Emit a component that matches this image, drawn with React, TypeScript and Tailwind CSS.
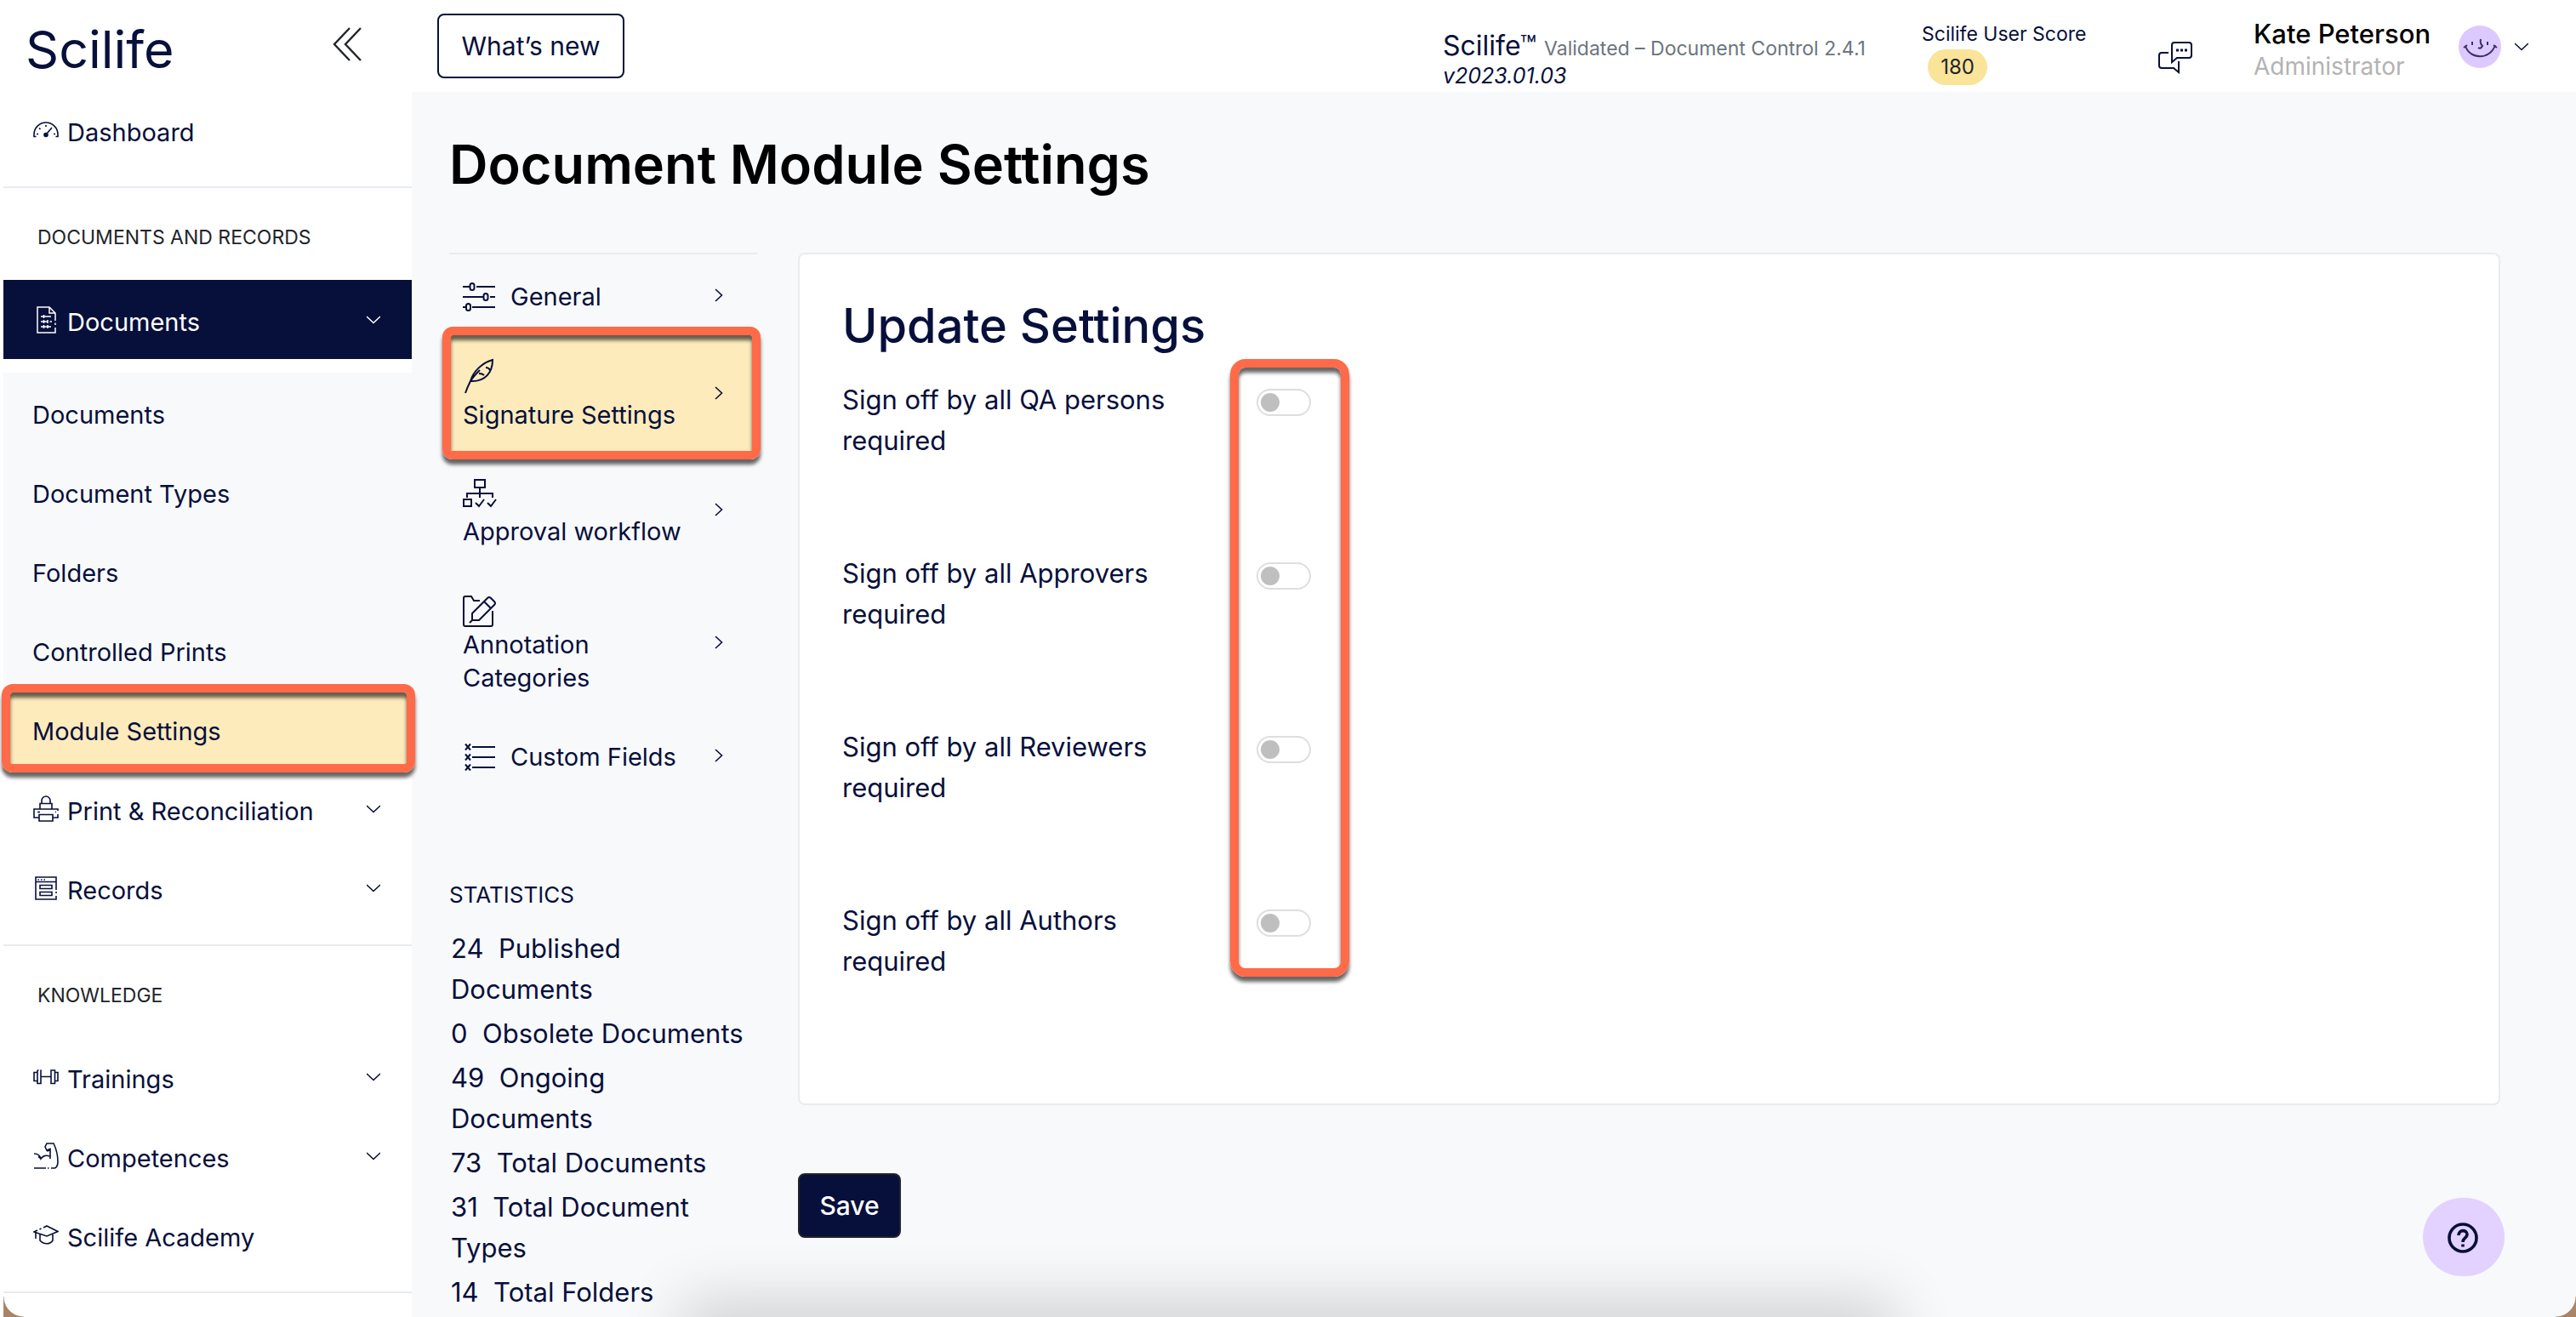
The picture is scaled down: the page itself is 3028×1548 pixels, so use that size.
import { ReactNode, SVGProps } from 'react'

type IconProps = SVGProps<SVGSVGElement>

function Icon({ children, ...props }: IconProps) {
  return (
    <svg fill="none" stroke="currentColor" strokeWidth={2} aria-hidden="true" {...props}>
      {children}
    </svg>
  )
}

const GaugeIcon = () => (
  <Icon viewBox="0 0 30 20" className="w-[30px] h-5" strokeWidth={1.6}>
    <path d="M3.5 17.5H1V15a14 14 0 0 1 28 0v2.5h-2.5M4 14.5h2M24 14.5h2M7 7.500l1.500 1.500M15 4v2M22 7l-5.500 6.500" />
    <circle cx="15" cy="15.500" r="2" fill="currentColor" />
  </Icon>
)

const DocumentIcon = () => (
  <Icon viewBox="0 0 30 32" className="w-[30px] h-8" strokeWidth={1.5}>
    <path d="M26 17V8l-7-7H5v30h21v-6M26 19.500v2.500M19 1v7h7M9 12h12M9 18h8M19.500 18H22M9 24h12M12.500 10v4M17 16v4M12.500 22v4M12.500 16v4M17 22v4" />
  </Icon>
)

const PrinterIcon = () => (
  <Icon viewBox="0 0 30 31" className="w-[30px] h-[31px]" strokeWidth={1.6}>
    <path d="M10 9V6a5 5 0 0 1 10 0v3M8 16V9.500h14V16M7 26H1V16h28v2M29 22v4h-6M7 22.500h16V30H7zM5 19.500h3M26 19.500h1" />
  </Icon>
)

const RecordsIcon = () => (
  <Icon viewBox="0 0 30 28" className="w-[30px] h-7" strokeWidth={1.6}>
    <path d="M27 16V1H3v26h24v-4M27 18v2M3 6.500h24M5.500 4h1.500M9 4h1.500M12.500 4H14M8 10.500h14v4H8zM8 18.500h14v4H8z" />
  </Icon>
)

const DumbbellIcon = () => (
  <Icon viewBox="0 0 30 18" className="w-[30px] h-[18px]" strokeWidth={1.6}>
    <path d="M5 3.500H1v10h4M5 1h1.500M8.500 1H9v15.500H5V1M9 8.500h12M21 1h4.500v15.500H21zM25.500 3.500H29v10h-3.500" />
  </Icon>
)

const ArmIcon = () => (
  <Icon viewBox="0 0 30 31" className="w-[30px] h-[31px]" strokeWidth={1.6}>
    <path d="M1 13c4 0 7 2 8 6 2-3 6-5 10-3M9 19l-3-2.500M20 19V7.500l-4 1.500-2-4 2-4h8c3 6 5 13 5 22 0 4-2 7-4 7h-4M1 30h14M17 30h1.500M20 9l-4 1" />
  </Icon>
)

const AcademyIcon = () => (
  <Icon viewBox="0 0 30 23" className="w-[30px] h-[23px]" strokeWidth={1.6}>
    <path d="M12 3l4-2 13 6.500L16 13 1 8l4-2M7.500 5l2-1M8 11v7c4 5 12 5 15 0v-7M3 9v5M2 15h2" />
  </Icon>
)

const SlidersIcon = () => (
  <Icon viewBox="0 0 38 34" className="w-[38px] h-[34px]">
    <path d="M0 5h8M16 5h22M0 17h24M32 17h6M0 29h4M11 29h27" />
    <rect x="8.500" y="1" width="5" height="8" rx="2.500" />
    <rect x="24.500" y="13" width="5" height="8" rx="2.500" />
    <rect x="4" y="25" width="5" height="8" rx="2.500" />
  </Icon>
)

const FeatherIcon = () => (
  <Icon viewBox="0 0 38 42" className="w-[38px] h-[42px]">
    <path d="M3 41c2-6 4-10 6-14C12 15 24 5 35 2c0 14-8 26-26 25M9 27c3-5 7-9 11-13M19 18c2 0 4 0 6 2M27 11c2 0 4 1 5 3" />
  </Icon>
)

const WorkflowIcon = () => (
  <Icon viewBox="0 -5 40 42" className="w-10 h-[42px]">
    <path d="M14 1h12v9H14zM20 10v12M5 22v-5h30v5M1 24h9v8H1zM15 28l4 4 6-8M29 28l4 4 6-8" />
  </Icon>
)

const NotesIcon = () => (
  <Icon viewBox="0 0 40 38" className="w-10 h-[38px]">
    <path d="M20 6h-7l-3-5H3a2 2 0 0 0-2 2v31a2 2 0 0 0 2 2h30a2 2 0 0 0 2-2V18" />
    <path d="M11 21L29 3q2-2 4 0l4 4q2 2 0 4L19 29h-8zM25 7l8 8M11 29l-3 3" />
  </Icon>
)

const FieldsIcon = () => (
  <Icon viewBox="0 0 38 34" className="w-[38px] h-[34px]">
    <path d="M11 5h27M11 17h27M11 29h27M3 1.500l6 7M9 1.500l-6 7M3 13.500l6 7M9 13.500l-6 7M3 25.500l6 7M9 25.500l-6 7" />
  </Icon>
)

const ChatIcon = () => (
  <Icon viewBox="0 0 40 38" className="w-10 h-[38px]">
    <path d="M18 1h18q3 0 3 3v12q0 3-3 3H22l-6 5V4q0-3 3-3zM12 13H4q-3 0-3 3v12q0 3 3 3h14l6 5V23" />
    <path d="M21 10h3M26 10h3M31 10h3" strokeWidth={3} />
  </Icon>
)

const ChevronDown = () => (
  <Icon viewBox="0 0 16 10" className="w-4 h-2.5 shrink-0" strokeWidth={1.6}>
    <path d="M0 1l8 7.500L16 1" />
  </Icon>
)

const ChevronRight = () => (
  <Icon viewBox="0 0 10 16" className="w-2.5 h-4 shrink-0" strokeWidth={1.6}>
    <path d="M1 1l7.500 7L1 15" />
  </Icon>
)

const documentLinks = ['Documents', 'Document Types', 'Folders', 'Controlled Prints', 'Module Settings']

const settingsTabs = [
  { name: 'General', icon: SlidersIcon, row: 'h-[95px]', inline: true },
  { name: 'Signature Settings', icon: FeatherIcon, row: 'h-[136px]', active: true },
  { name: 'Approval workflow', icon: WorkflowIcon, row: 'h-[138px]' },
  { name: 'Annotation Categories', icon: NotesIcon, row: 'h-[173px]', tight: true },
  { name: 'Custom Fields', icon: FieldsIcon, row: 'h-[93px]', inline: true },
]

const statistics = [
  { count: 24, label: 'Published Documents' },
  { count: 0, label: 'Obsolete Documents' },
  { count: 49, label: 'Ongoing Documents' },
  { count: 73, label: 'Total Documents' },
  { count: 31, label: 'Total Document Types' },
  { count: 14, label: 'Total Folders' },
]

const signOffRoles = ['QA persons', 'Approvers', 'Reviewers', 'Authors']

// Orange call-out frame laid over the element it points at
function Highlight({ className }: { className: string }) {
  return (
    <div
      className={`pointer-events-none absolute z-10 border-[10px] border-[#ff6a48] shadow-[0_6px_4px_rgba(0,0,0,0.6),inset_0_6px_4px_rgba(0,0,0,0.6)] ${className}`}
    />
  )
}

interface NavItemProps {
  name: string
  icon: ReactNode
  expandable?: boolean
  active?: boolean
}

function NavItem({ name, icon, expandable, active }: NavItemProps) {
  return (
    <a
      href="#"
      className={`flex h-[93px] items-center pl-[35px] pr-[37px] ${active ? 'bg-[#070f3b] pt-1.5 text-white' : ''}`}
    >
      <span className="mb-1.5">{icon}</span>
      <span className="ml-2.5 flex-1 whitespace-nowrap">{name}</span>
      {expandable && (
        <span className="mb-1.5">
          <ChevronDown />
        </span>
      )}
    </a>
  )
}

function Sidebar() {
  return (
    <aside className="ml-1 w-[480px] shrink-0 bg-white text-[29px]">
      <div className="flex h-[109px] items-start justify-between pl-[26px] pr-[59px] pt-[22px]">
        <span className="text-[61px] leading-[72px]">Scilife</span>
        <button type="button" aria-label="Collapse menu" className="mt-2.5 text-[#212529]">
          <Icon viewBox="0 0 34 40" className="w-[34px] h-10" strokeWidth={2.4}>
            <path d="M20 1L2 20l18 19M33 1L15 20l18 19" />
          </Icon>
        </button>
      </div>

      <nav>
        <NavItem name="Dashboard" icon={<GaugeIcon />} />

        <h2 className="mt-[17px] flex h-[110px] items-center border-t-2 border-[#e9ecef] pl-10 pt-2 text-[23px] text-[#212529]">
          DOCUMENTS AND RECORDS
        </h2>
        <NavItem name="Documents" icon={<DocumentIcon />} expandable active />
        <ul className="mt-4 bg-[#f8f9fb] pt-1">
          {documentLinks.map((name) => (
            <li key={name} className="relative">
              <a
                href="#"
                className={`flex h-[93px] items-center pb-px pl-[34px] ${name === 'Module Settings' ? 'bg-[#fdebbb]' : ''}`}
              >
                {name}
              </a>
              {name === 'Module Settings' && <Highlight className="-left-0.5 -right-1 -top-2.5 -bottom-px rounded-[13px]" />}
            </li>
          ))}
        </ul>
        <NavItem name="Print & Reconciliation" icon={<PrinterIcon />} expandable />
        <NavItem name="Records" icon={<RecordsIcon />} expandable />

        <h2 className="mt-[17px] flex h-[112px] items-center border-t-2 border-[#e9ecef] pl-10 pt-1.5 text-[23px] text-[#212529]">
          KNOWLEDGE
        </h2>
        <NavItem name="Trainings" icon={<DumbbellIcon />} expandable />
        <NavItem name="Competences" icon={<ArmIcon />} expandable />
        <NavItem name="Scilife Academy" icon={<AcademyIcon />} />
        <div className="mt-[17px] border-t-2 border-[#e9ecef]" />
      </nav>
    </aside>
  )
}

function Header() {
  return (
    <header className="flex h-[108px] items-start bg-white pl-[30px] pr-14">
      <button type="button" className="mt-4 h-[76px] w-[220px] rounded-lg border-2 border-[#070f3b]">
        What’s new
      </button>
      <div className="ml-auto mt-9 w-[563px] whitespace-nowrap">
        <p className="text-[32px] leading-9">
          Scilife™ <span className="text-[23px] text-[#6c757d]">Validated – Document Control 2.4.1</span>
        </p>
        <p className="text-[25px] leading-7 italic">v2023.01.03</p>
      </div>
      <div className="mt-6 w-[278px] whitespace-nowrap">
        <p className="text-[23px] leading-8">Scilife User Score</p>
        <span className="ml-[7px] mt-0.5 flex h-[42px] w-[70px] items-center justify-center rounded-full bg-[#fae49a] text-2xl text-[#212529]">
          180
        </span>
      </div>
      <button type="button" aria-label="Messages" className="mt-[49px] w-[112px]">
        <ChatIcon />
      </button>
      <div className="mt-5 w-[241px] whitespace-nowrap">
        <p className="text-[31px] font-medium leading-10 text-black">Kate Peterson</p>
        <p className="text-[28px] leading-9 text-[#b3b3b3]">Administrator</p>
      </div>
      <button type="button" aria-label="Account menu" className="mt-[30px] flex items-center gap-4">
        <svg viewBox="0 0 50 50" className="h-[50px] w-[50px]" fill="none" stroke="#3a2f66" strokeWidth={2} aria-hidden="true">
          <circle cx="25" cy="25" r="25" fill="#dcc9ff" stroke="none" />
          <path d="M8 24c5 16 29 17 35-1M6 26l4-3M41 23l4 3M16 19v4M34 19v4M26 16c-1 4 0 6 2 8q-2 4-5 2" />
        </svg>
        <ChevronDown />
      </button>
    </header>
  )
}

function SettingsNav() {
  return (
    <nav className="border-t-2 border-[#e9ecef] text-[29px]">
      {settingsTabs.map((tab) => (
        <div key={tab.name} className="relative">
          <a
            href="#"
            className={`flex items-center justify-between pl-4 pr-10 ${tab.row} ${tab.active ? 'bg-[#fdebbb]' : ''}`}
          >
            <span className={tab.inline ? 'flex items-center gap-[18px] pt-1' : 'flex w-[270px] flex-col pt-1.5'}>
              <tab.icon />
              <span className={tab.inline || tab.tight ? 'leading-[39px]' : 'pt-1 leading-[42px]'}>{tab.name}</span>
            </span>
            <ChevronRight />
          </a>
          {tab.active && <Highlight className="-left-2 -right-1 -top-2.5 -bottom-2.5 rounded-xl" />}
        </div>
      ))}
    </nav>
  )
}

export default function App() {
  return (
    <div className="relative flex min-h-screen overflow-hidden bg-white font-['Inter',sans-serif] text-[30px] leading-[48px] text-[#070f3b]">
      <Sidebar />

      <div className="flex min-w-0 flex-1 flex-col">
        <Header />

        <main className="flex-1 bg-[#f8f9fb] pl-11 pr-[89px] text-[31px]">
          <h1 className="pt-[45px] text-[63px] font-semibold leading-[80px] text-black">Document Module Settings</h1>

          <div className="mt-16 flex items-start gap-12">
            <div className="w-[362px] shrink-0">
              <SettingsNav />
              <h2 className="mt-[94px] text-[26px]">STATISTICS</h2>
              <ul className="mt-[15px] flex flex-col gap-1 pl-0.5 pr-3">
                {statistics.map(({ count, label }) => (
                  <li key={label}>
                    {count}&nbsp; {label}
                  </li>
                ))}
              </ul>
            </div>

            <form className="min-w-0 flex-1">
              <section className="rounded-lg border-2 border-[#e9ecef] bg-white px-[50px] pb-[38px] pt-11">
                <h2 className="text-[56px] font-medium leading-[80px]">Update Settings</h2>
                <div className="relative mt-5">
                  {signOffRoles.map((role) => (
                    <label key={role} className="flex h-[204px] items-start">
                      <span className="w-[487px] pr-20 pt-[3px]">Sign off by all {role} required</span>
                      <input
                        type="checkbox"
                        role="switch"
                        className="mt-3.5 h-8 w-16 appearance-none rounded-full border-2 border-[#dedede] bg-white before:m-[3px] before:block before:h-[22px] before:w-[22px] before:rounded-full before:bg-[#bfbfbf]"
                      />
                    </label>
                  ))}
                  <Highlight className="left-[456px] -top-[21px] h-[726px] w-[140px] rounded-[18px]" />
                </div>
              </section>
              <button
                type="submit"
                className="mt-20 h-[76px] w-[121px] rounded-lg border-2 border-[#212529] bg-[#070f3b] text-[30px] font-medium text-white"
              >
                Save
              </button>
            </form>
          </div>
        </main>
      </div>

      <button
        type="button"
        aria-label="Help"
        className="fixed bottom-12 right-[84px] flex h-[92px] w-24 items-center justify-center rounded-full bg-[#e3d1ff] pr-0.5 pt-0.5"
      >
        <Icon viewBox="0 0 36 36" className="h-9 w-9" strokeWidth={3.6}>
          <circle cx="18" cy="18" r="16" />
          <path d="M13 15c0-7 10-7 10-1 0 4-5 4-5 9M18 25.500v3" />
        </Icon>
      </button>

      {/* Window shadow and rounded window corners at the bottom edge */}
      <div className="pointer-events-none fixed -bottom-10 left-[820px] right-[820px] h-10 shadow-[0_0_70px_20px_rgba(0,0,0,0.16)]" />
      <div className="pointer-events-none fixed bottom-0 left-1 h-6 w-6 bg-[radial-gradient(circle_at_top_right,transparent_23px,#a98467_24px)]" />
      <div className="pointer-events-none fixed bottom-0 right-0 h-6 w-6 bg-[radial-gradient(circle_at_top_left,transparent_23px,#a98467_24px)]" />
    </div>
  )
}
